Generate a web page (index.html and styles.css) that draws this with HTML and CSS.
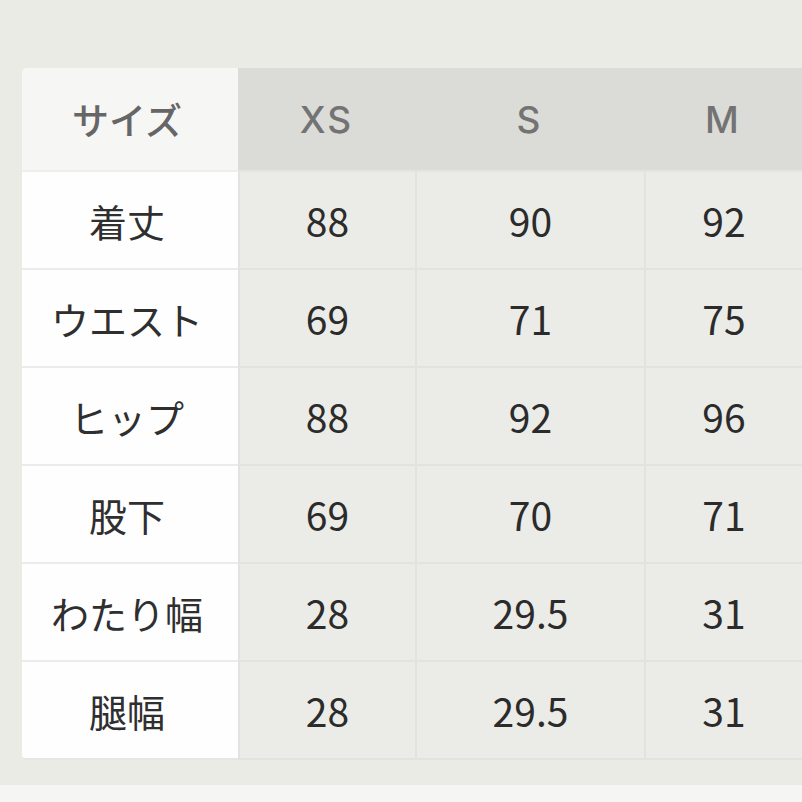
FILE: index.html
```html
<!DOCTYPE html>
<html lang="ja">
<head>
<meta charset="utf-8">
<title>サイズ表</title>
<link rel="stylesheet" href="styles.css">
</head>
<body>
<div class="page">
  <div class="wrap">
    <table class="size-table">
      <thead>
        <tr>
          <th class="label head-label">サイズ</th>
          <th class="size">XS</th>
          <th class="size">S</th>
          <th class="size last">M</th>
        </tr>
      </thead>
      <tbody>
        <tr><th class="label">着丈</th><td>88</td><td>90</td><td class="last">92</td></tr>
        <tr><th class="label">ウエスト</th><td>69</td><td>71</td><td class="last">75</td></tr>
        <tr><th class="label">ヒップ</th><td>88</td><td>92</td><td class="last">96</td></tr>
        <tr><th class="label">股下</th><td>69</td><td>70</td><td class="last">71</td></tr>
        <tr><th class="label">わたり幅</th><td>28</td><td>29.5</td><td class="last">31</td></tr>
        <tr class="final"><th class="label">腿幅</th><td>28</td><td>29.5</td><td class="last">31</td></tr>
      </tbody>
    </table>
  </div>
  <div class="footer"></div>
</div>
</body>
</html>
```

FILE: styles.css
```css
html, body {
  margin: 0;
  padding: 0;
  background: #ebebe6;
}

.page {
  width: 802px;
  height: 802px;
  overflow: hidden;
  display: flex;
  flex-direction: column;
}

.wrap {
  padding: 68px 0 0 22px;
  height: 717px;
  box-sizing: border-box;
}

.size-table {
  border-collapse: separate;
  border-spacing: 0;
  table-layout: fixed;
  width: 780px;
  font-family: "Noto Sans CJK JP", "Noto Sans", sans-serif;
}

.size-table th,
.size-table td {
  padding: 0;
  text-align: center;
  vertical-align: middle;
  box-sizing: border-box;
}

.label {
  width: 216px;
  background: #fefefe;
  color: #2f2f2f;
  font-size: 38px;
  font-weight: 400;
  border-bottom: 2px solid #ebebea;
  padding-right: 6px !important;
}

.head-label {
  background: #f6f6f4;
  color: #666666;
  font-weight: 500;
  font-size: 37px;
  border-top-left-radius: 5px;
  border-bottom: 2px solid #eeeeec;
}

.size {
  background: #dbdbd7;
  color: #737373;
  font-family: "Inter", "Lato", sans-serif;
  font-weight: 500;
  font-size: 37px;
  letter-spacing: 2px;
  height: 104px;
  border-bottom: 2px solid #e4e4e0;
}

.size-table th.size:nth-child(2) { width: 177px; }
.size-table th.size:nth-child(3) { width: 229px; }
.size-table th.size:nth-child(4) { width: 158px; }

.size-table td {
  background: #ebebe7;
  color: #2b2b2b;
  font-size: 39px;
  height: 98px;
  border-bottom: 2px solid #e2e2de;
  border-left: 2px solid #e2e2de;
}

.size-table .label {
  height: 98px;
}

.size-table .head-label {
  height: 104px;
}

.final .label {
  border-bottom-left-radius: 4px;
  border-bottom-color: #e6e6e2;
}

.footer {
  margin-top: 68px;
  height: 17px;
  background: #f5f5f3;
}
```
